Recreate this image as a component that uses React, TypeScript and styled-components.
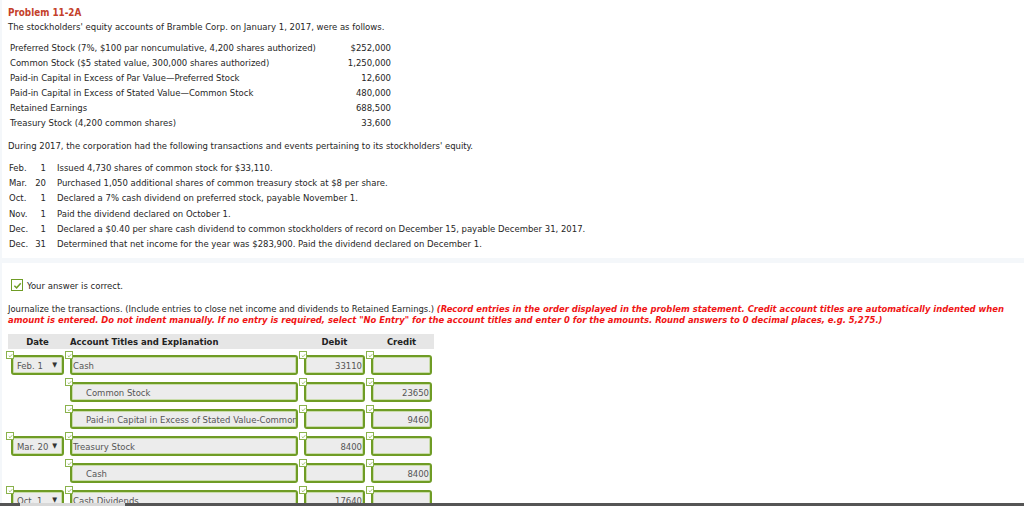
import React from "react";
import styled, { createGlobalStyle } from "styled-components";

const Global = createGlobalStyle`
  html, body { margin: 0; padding: 0; background: #f4f7fa; }
  body {
    font-family: "DejaVu Sans Condensed", "DejaVu Sans", Verdana, sans-serif;
    font-size: 9.45px;
    color: #262626;
    width: 1024px;
    height: 506px;
    overflow: hidden;
  }
`;

const Panel = styled.section<{ $h?: number; $top?: number }>`
  background: #fff;
  margin-left: 2px;
  margin-top: ${(p) => p.$top ?? 0}px;
  padding-left: 6px;
  box-sizing: border-box;
  ${(p) => (p.$h ? `height: ${p.$h}px;` : "")}
  overflow: hidden;
`;

const Title = styled.h1`
  margin: 0;
  padding-top: 6px;
  font-size: 9.8px;
  line-height: 14px;
  font-weight: bold;
  color: #c4402a;
`;

const Para = styled.p<{ $top?: number }>`
  margin: ${(p) => p.$top ?? 0}px 0 0 0;
  line-height: 14px;
`;

const EquityTable = styled.div`
  margin-top: 6px;
  margin-left: 2px;
  width: 381px;
  display: grid;
  grid-template-columns: 1fr auto;
  grid-auto-rows: 15px;
  align-items: center;
`;

const Amount = styled.span`
  text-align: right;
`;

const TxList = styled.div`
  margin-top: 7px;
  display: grid;
  grid-template-columns: 24px 13px 1fr;
  grid-auto-rows: 15.2px;
  align-items: center;
  margin-left: 1px;
`;

const Day = styled.span`
  text-align: right;
`;

const TxText = styled.span`
  padding-left: 11px;
  white-space: nowrap;
`;

const CorrectRow = styled.div`
  margin-top: 16px;
  margin-left: 3px;
  display: flex;
  align-items: center;
  gap: 4px;
  height: 12px;
`;

const Instructions = styled.p`
  margin: 13px 0 0 0;
  font-size: 9.35px;
  line-height: 10.5px;
  white-space: nowrap;
`;

const Red = styled.em`
  color: #f01414;
  font-weight: bold;
  font-style: italic;
`;

const Journal = styled.div`
  margin-top: 9px;
  width: 426px;
`;

const cols = `53px 228px 61px 61px`;

const HeadRow = styled.div`
  background: #e6e6e6;
  height: 15px;
  display: grid;
  grid-template-columns: ${cols};
  column-gap: 6px;
  padding-left: 3px;
  align-items: center;
  font-weight: bold;
  color: #222;
`;

const HeadCell = styled.span<{ $align?: string }>`
  text-align: ${(p) => p.$align ?? "center"};
`;

const Rows = styled.div`
  margin-top: 6px;
  padding-left: 3px;
  display: grid;
  grid-template-columns: ${cols};
  column-gap: 6px;
  row-gap: 7px;
  grid-auto-rows: 20px;
`;

const Cell = styled.div`
  position: relative;
`;

const Badge = styled.span`
  position: absolute;
  left: -5px;
  top: -4px;
  width: 8px;
  height: 8px;
  box-sizing: border-box;
  background: #fff;
  border: 1px solid #8ab24c;
  z-index: 1;
  display: flex;
  align-items: center;
  justify-content: center;
`;

const Field = styled.div<{ $align?: "left" | "right"; $indent?: boolean }>`
  box-sizing: border-box;
  height: 20px;
  border: 2px solid #6f9c25;
  border-radius: 3px;
  background: #ececec;
  box-shadow: inset 0 0 0 1px #c9dcaa;
  color: #555;
  display: flex;
  align-items: center;
  justify-content: ${(p) => (p.$align === "right" ? "flex-end" : "flex-start")};
  padding: 0 ${(p) => (p.$align === "right" ? "1px" : "0")} 0
    ${(p) => (p.$indent ? "14px" : "1px")};
  white-space: nowrap;
  overflow: hidden;
`;

const SelectField = styled(Field)`
  justify-content: space-between;
  padding: 0 5px 0 4px;
`;

const Arrow = styled.span`
  font-size: 7px;
  color: #333;
`;

const BottomBar = styled.div`
  position: fixed;
  left: 0;
  right: 0;
  bottom: 0;
  height: 3px;
  background: #555;
  display: flex;
`;

const BarThumb = styled.span`
  margin-left: 20px;
  width: 105px;
  background: #d8d8d8;
`;

const Tick = ({ size = 6, color = "#6f9c25" }: { size?: number; color?: string }) => (
  <svg width={size} height={size} viewBox="0 0 10 10">
    <path d="M1.5 5.2 L4 7.6 L8.6 2.4" fill="none" stroke={color} strokeWidth={1.6} />
  </svg>
);

const CheckBox = styled.span`
  width: 12px;
  height: 12px;
  box-sizing: border-box;
  border: 1px solid #6f9c25;
  background: #fff;
  display: flex;
  align-items: center;
  justify-content: center;
`;

type Row = {
  date?: string;
  account: string;
  indent?: boolean;
  debit?: string;
  credit?: string;
};

const rows: Row[] = [
  { date: "Feb. 1", account: "Cash", debit: "33110" },
  { account: "Common Stock", indent: true, credit: "23650" },
  { account: "Paid-in Capital in Excess of Stated Value-Common Stock", indent: true, credit: "9460" },
  { date: "Mar. 20", account: "Treasury Stock", debit: "8400" },
  { account: "Cash", indent: true, credit: "8400" },
  { date: "Oct. 1", account: "Cash Dividends", debit: "17640" },
];

const equity: [string, string][] = [
  ["Preferred Stock (7%, $100 par noncumulative, 4,200 shares authorized)", "$252,000"],
  ["Common Stock ($5 stated value, 300,000 shares authorized)", "1,250,000"],
  ["Paid-in Capital in Excess of Par Value\u2014Preferred Stock", "12,600"],
  ["Paid-in Capital in Excess of Stated Value\u2014Common Stock", "480,000"],
  ["Retained Earnings", "688,500"],
  ["Treasury Stock (4,200 common shares)", "33,600"],
];

const txs: [string, string, string][] = [
  ["Feb.", "1", "Issued 4,730 shares of common stock for $33,110."],
  ["Mar.", "20", "Purchased 1,050 additional shares of common treasury stock at $8 per share."],
  ["Oct.", "1", "Declared a 7% cash dividend on preferred stock, payable November 1."],
  ["Nov.", "1", "Paid the dividend declared on October 1."],
  ["Dec.", "1", "Declared a $0.40 per share cash dividend to common stockholders of record on December 15, payable December 31, 2017."],
  ["Dec.", "31", "Determined that net income for the year was $283,900. Paid the dividend declared on December 1."],
];

const Boxed = ({ children }: { children: React.ReactNode }) => (
  <Cell>
    <Badge>
      <Tick size={5} color="#8ab24c" />
    </Badge>
    {children}
  </Cell>
);

export default function App() {
  return (
    <>
      <Global />
      <Panel $h={258}>
        <Title>Problem 11-2A</Title>
        <Para>The stockholders' equity accounts of Bramble Corp. on January 1, 2017, were as follows.</Para>
        <EquityTable>
          {equity.map(([l, a]) => (
            <React.Fragment key={l}>
              <span>{l}</span>
              <Amount>{a}</Amount>
            </React.Fragment>
          ))}
        </EquityTable>
        <Para $top={9}>
          During 2017, the corporation had the following transactions and events pertaining to its stockholders' equity.
        </Para>
        <TxList>
          {txs.map(([m, d, t], i) => (
            <React.Fragment key={i}>
              <span>{m}</span>
              <Day>{d}</Day>
              <TxText>{t}</TxText>
            </React.Fragment>
          ))}
        </TxList>
      </Panel>
      <Panel $top={5} $h={300}>
        <CorrectRow>
          <CheckBox>
            <Tick size={9} />
          </CheckBox>
          <span>Your answer is correct.</span>
        </CorrectRow>
        <Instructions>
          Journalize the transactions. (Include entries to close net income and dividends to Retained Earnings.){" "}
          <Red>
            (Record entries in the order displayed in the problem statement. Credit account titles are automatically
            indented when
            <br />
            amount is entered. Do not indent manually. If no entry is required, select "No Entry" for the account titles
            and enter 0 for the amounts. Round answers to 0 decimal places, e.g. 5,275.)
          </Red>
        </Instructions>
        <Journal>
          <HeadRow>
            <HeadCell>Date</HeadCell>
            <HeadCell $align="left">Account Titles and Explanation</HeadCell>
            <HeadCell>Debit</HeadCell>
            <HeadCell>Credit</HeadCell>
          </HeadRow>
          <Rows>
            {rows.map((r, i) => (
              <React.Fragment key={i}>
                {r.date ? (
                  <Boxed>
                    <SelectField>
                      <span>{r.date}</span>
                      <Arrow>▼</Arrow>
                    </SelectField>
                  </Boxed>
                ) : (
                  <div />
                )}
                <Boxed>
                  <Field $indent={r.indent}>{r.account}</Field>
                </Boxed>
                <Boxed>
                  <Field $align="right">{r.debit}</Field>
                </Boxed>
                <Boxed>
                  <Field $align="right">{r.credit}</Field>
                </Boxed>
              </React.Fragment>
            ))}
          </Rows>
        </Journal>
      </Panel>
      <BottomBar>
        <BarThumb />
      </BottomBar>
    </>
  );
}
